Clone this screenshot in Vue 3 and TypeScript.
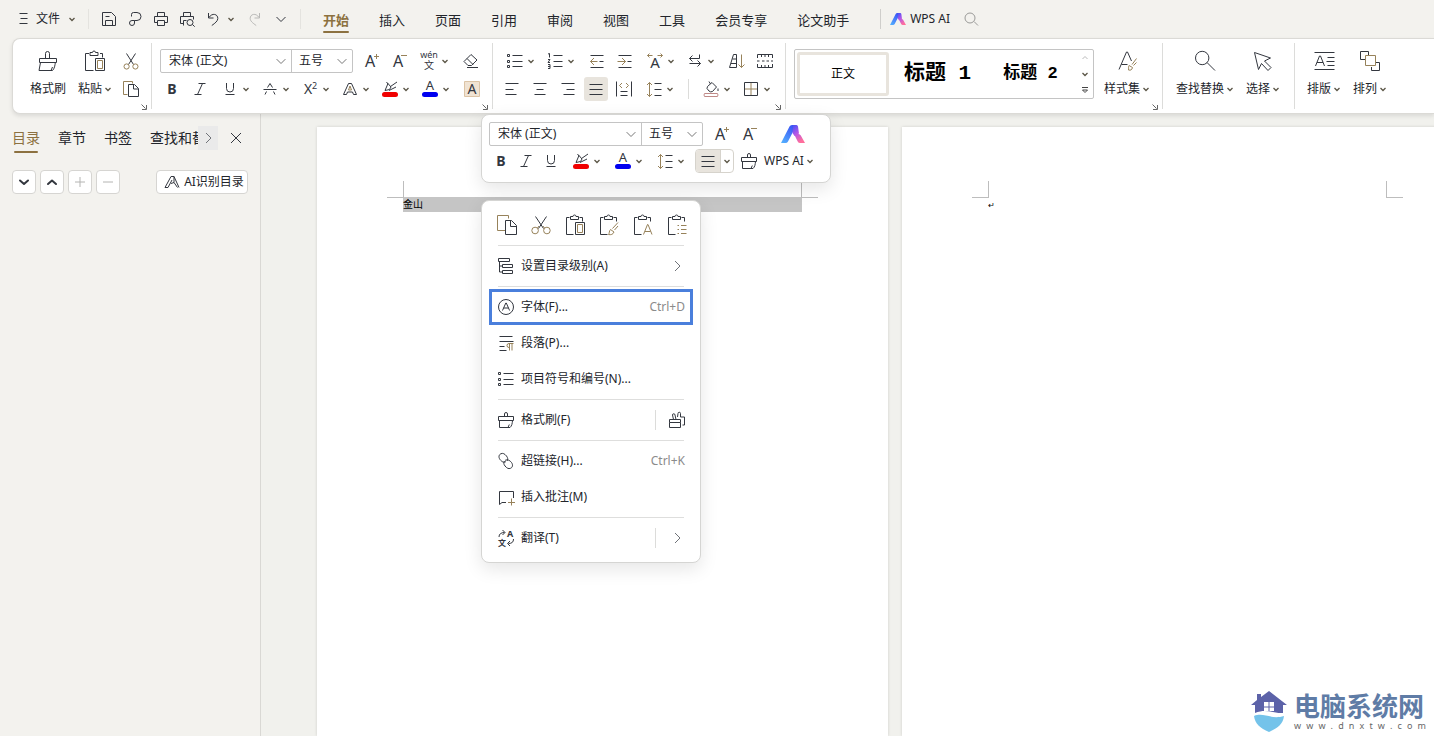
<script setup lang="ts">
import { h, type FunctionalComponent } from 'vue'

type Stroke = { d: string; c?: string; w?: number; f?: string }
type Glyph = { t: string; x: number; y: number; s: number; c?: string; b?: boolean }
type Shape = Stroke | Glyph

const K = '#33373f'
const G = '#97825a'
const clip = 'M6.5 4.5H3.5v17h7M16.5 4.5h3v4M7.5 6.5v-3h2.5a1.5 1.5 0 0 1 3 0h2.5v3z'
const brush = 'M10.500 8.500V6a1.500 1.500 0 0 1 3 0v2.500M4.500 12.500v-4h15v4zM5.500 12.500v7H16c1.800-1.500 2.300-4 2.500-7M14 19.500l1.300-3'
const scissors = 'M7.5 4.5l7 11M16.5 4.5l-7 11'
const loops = 'M5 17.5a2.6 2.6 0 1 0 5.2 0 2.6 2.6 0 1 0-5.2 0M13.8 17.5a2.6 2.6 0 1 0 5.2 0 2.6 2.6 0 1 0-5.2 0'
const marker = 'M7 13.500l3-7 3 3.500-1.500 2.500zM12.500 9.500L19 5M8.500 5l1.500 2M11 13.500l7-3.500'
const bar = 'M6.500 17.500h11'

const icons: Record<string, Shape[]> = {
  menu: [{ d: 'M7.5 6.5h8M8.5 11.5h7M7.5 16.5h8' }],
  save: [{ d: 'M5.5 5.5h9l4 4v9h-13zM8.5 18.5v-5h7v5M8.5 9.5h4' }],
  share: [{ d: 'M8.5 9.5v-2q0-2 2-2H14a4 4 0 0 1 0 8h-2.5v2.5a2.5 2.5 0 1 1-2.5-2.5h2.5' }],
  print: [{ d: 'M8.5 9.5v-4h7v4M8.5 15.5h-3v-6h13v6h-3M8.5 13.5h7v5h-7z' }],
  preview: [{ d: 'M8.5 9.5v-4h7v4M8.5 16.5h-3v-7h13v3M8.5 18.5v-5h3M17.5 17.5l2.2 2.2M12 15.5a3 3 0 1 0 6 0 3 3 0 1 0-6 0' }],
  undo: [{ d: 'M7.5 6v5h5M8 10.5C11 5.5 17 7 16.8 11.5c0 2.5-2.5 4.5-6 7' }],
  redo: [{ d: 'M16.5 6v5h-5M16 10.5C13 5.5 7 7 7.2 11.5c0 2.5 2.5 4.5 6 7', c: '#b9b9b7' }],
  down: [{ d: 'M7.5 10l4.5 4.5 4.5-4.5' }],
  brush: [{ d: brush }],
  brushLg: [{ d: 'M9.500 9.500V4.500a2 2 0 0 1 4 0v5M3.500 13.500v-4h17v4zM4.500 13.500l-1.500 8h13.500c2-2 2.500-5 2.800-8M15 21.500l1.500-3.500' }],
  pasteLg: [{ d: 'M6 4.5H2.5v17h8M17 4.5h2.5v4M7 6.5v-3h2.5a1.5 1.5 0 0 1 3 0H15v3zM12.5 9.5h9v12h-9z' }, { d: 'M14.5 11.5h5v8h-5z', c: G }],
  cut: [{ d: scissors }, { d: loops, c: G }],
  cutLg: [{ d: 'M6.5 3.5l8 12M17.5 3.5l-8 12' }, { d: 'M2.8 17.5a3.3 3.3 0 1 0 6.6 0 3.3 3.3 0 1 0-6.6 0M14.6 17.5a3.3 3.3 0 1 0 6.6 0 3.3 3.3 0 1 0-6.6 0M8.5 15l1.5-2M15.5 15L14 13', c: G }],
  copy: [{ d: 'M8.5 17.5h-4v-13h9v2', c: G }, { d: 'M9.5 7.5h6l4 4v8h-10zM14.5 7.5v4.5h5' }],
  copyLg: [{ d: 'M10.5 17.5h-8v-15h11v3', c: G }, { d: 'M10.5 7.5h6l5 5v9h-11zM15.5 7.5v6h6' }],
  paste: [{ d: clip + 'M12.5 9.5h9v12h-9z' }, { d: 'M14.5 11.5h5v8h-5z', c: G }],
  pasteBrush: [{ d: clip }, { d: 'M21 9.5l-5.5 6M21 13l-3.5 4M13.5 16.5l3.5 2.5c-1 2.5-3 3-5.500 2.500 1-1 .5-3.500 2-5z', c: G }],
  pasteA: [{ d: clip }, { d: 'M12.500 21.500l4-10h.5l4 10M14 18.500h5.500', c: G }],
  pasteList: [{ d: clip }, { d: 'M12.500 12.500h1.500M16 12.500h5.500M12.500 16.500h1.500M16 16.500h5.500M12.500 20.500h1.500M16 20.500h5.500', c: G }],
  bold: [{ t: 'B', x: 12, y: 17, s: 14, b: true }],
  italic: [{ d: 'M10.500 6.500h7M6.500 17.500h7M14.500 6.500l-5 11' }],
  underline: [{ d: 'M8.500 6v5.500a3.500 3.500 0 0 0 7 0V6M7.500 17.500h9' }],
  strike: [{ d: 'M9.500 10.500l2.500-4 2.500 4M5.500 12.500h13M8.500 14.500l-1.500 3M15.500 14.500l1.500 3' }],
  sup: [{ t: 'X', x: 10, y: 17, s: 14 }, { t: '2', x: 16.500, y: 12, s: 9 }],
  outline: [{ d: 'M5.500 17.500L10.500 6.500h3l5 11h-3l-1-2.500h-5l-1 2.500z' }, { d: 'M10.500 13l1.500-4 1.500 4z', c: G }],
  highlight: [{ d: marker }, { d: bar, c: '#f00000', w: 5 }],
  fontColor: [{ t: 'A', x: 12, y: 13, s: 13 }, { d: bar, c: '#0000f0', w: 5 }],
  shade: [{ d: 'M4.500 4.500h15v15h-15z', c: '#dcc4a6', f: '#f0e3d3' }, { t: 'A', x: 12, y: 17, s: 14 }],
  grow: [{ t: 'A', x: 11, y: 18, s: 16 }, { d: 'M15 7.500h5M17.500 5v5', c: G }],
  shrink: [{ t: 'A', x: 11, y: 18, s: 16 }, { d: 'M14 6.500h6', c: G }],
  pinyin: [{ t: 'wén', x: 12, y: 9, s: 9 }, { t: '文', x: 12, y: 20, s: 10 }],
  eraser: [{ d: 'M5 12.500l7-7 6 5.500-5.500 5.500H9zM8 9.500l6 6M8 18.500h11' }],
  bullets: [{ d: 'M9.500 6.500h10M9.500 12.500h10M9.500 17.500h10M4.500 5.500h2v2h-2zM4.500 11.500h2v2h-2zM4.500 16.500h2v2h-2z' }],
  numbers: [{ d: 'M10.500 6.500h9M10.500 12.500h9M10.500 17.500h9M5 5l1.500-.5v4M5 10.500h2l-2 3h2M5 15.500h2v4H5M5 17.500h2' }],
  outdent: [{ d: 'M5.500 6.500h13M14.500 12.500h4M5.500 18.500h13' }, { d: 'M12.500 12.500h-7M9 9l-3.500 3.500L9 16', c: G }],
  indent: [{ d: 'M5.500 6.500h13M14.500 12.500h4M5.500 18.500h13' }, { d: 'M4.500 12.500h8M9 9l3.500 3.500L9 16', c: G }],
  spread: [{ t: 'A', x: 12, y: 19, s: 15 }, { d: 'M4.500 6.500h5M14.500 6.500h5M6.500 4.500l-2 2 2 2M17.500 4.500l2 2-2 2', c: G }],
  wrap: [{ d: 'M16.500 5.500v4h-10M9.500 6.500l-3 3 3 3M6.500 14.500h11M14.500 11.500l3 3-3 3' }],
  sort: [{ d: 'M8.500 5.500h3v13M4.500 18.500l4-13M4.500 18.500h7M6 14.500h5.500M7.500 10h4' }, { d: 'M16.500 5.500v13M13.500 15.500l3 3 3-3', c: G }],
  cells: [{ d: 'M4.500 9V5.500h15V9M8.500 5.500V8M12 5.500V8M15.500 5.500V8M4.500 15v3.500h15V15M8.500 16v2.500M12 16v2.500M15.500 16v2.500M4 12h2.500M9 12h2.500M13.500 12H16M18 12h2' }],
  left: [{ d: 'M5.500 6.500h13M5.500 12.500h8M5.500 17.500h11' }],
  center: [{ d: 'M5.500 6.500h13M8.500 12.500h7M6.500 17.500h11' }],
  right: [{ d: 'M5.500 6.500h13M10.500 12.500h8M7.500 17.500h11' }],
  justify: [{ d: 'M5.500 7.500h13M5.500 12.500h13M5.500 17.500h13' }],
  distribute: [{ d: 'M4.500 4.500v15M19.500 4.500v15M8.500 14.500h7M8.500 18.500h7' }, { d: 'M10 6L7.500 8.500 10 11M14 6l2.500 2.500L14 11', c: G }],
  spacing: [{ d: 'M12.500 6.500h7M12.500 12.500h7M12.500 18.500h7' }, { d: 'M7.500 5.500v14M5 8l2.500-2.500L10 8M5 17l2.500 2.500L10 17', c: G }],
  fill: [{ d: 'M8.500 9.500l4.500-4 4.500 4.500-4 4.500q-2 1-3.500-.5l-2-2.500zM11.500 7L10 4.500M19 11.500v2.500' }, { d: 'M5.500 16.500h13q1 1.500 0 3h-13q-1-1.500 0-3z', c: '#c08a88' }],
  border: [{ d: 'M12 6v12M6 12h12', c: G }, { d: 'M5.500 5.500h13v13h-13z' }],
  styles: [{ d: 'M4 20.500L11.500 3h1l4 9M6.500 15.500h6' }, { d: 'M21.500 9.500l-4.500 6M21.500 13.500l-3 3M14 16.500l3.500 2c-.5 2.500-2 3-4 2.500.5-1.500-.5-3 .5-4.500z', c: G }],
  find: [{ d: 'M2.500 9a6.700 6.700 0 1 0 13.400 0 6.700 6.700 0 1 0-13.400 0M14 13.500l8 8' }],
  pointer: [{ d: 'M3.500 3.500l16 5.500-6 3 6.500 6.500-3 3-6.500-7-3 6z' }],
  typeset: [{ d: 'M2.500 3.500h20M2.500 20.500h20M15.500 8.500h7M14.500 12.500h8M15.500 16.500h7M3.500 17L7.500 7h1l4 10M5 13.500h6' }],
  arrange: [{ d: 'M7 10.500H2.500v-8h8V6M17 13.500h4.500v8h-8V18' }, { d: 'M7.500 6.500h10v10h-10z', c: G }],
  search: [{ d: 'M6 11a5 5 0 1 0 10 0 5 5 0 1 0-10 0M15 14.500l4 4', c: '#9a9a98' }],
  aiToc: [{ d: 'M5 17.500L11 6.500h3l5 11M5 17.500h3l4-7.500M11 13.500l3-1 3.500 5M14 6.500v6' }],
  tree: [{ d: 'M4.500 4.500h11v3h-11zM8.500 10.500h10v3h-10zM8.500 16.500h10v3h-10zM5.500 7.500v10.500h3M5.500 12h3' }],
  circleA: [{ d: 'M4.500 12a7.500 7.500 0 1 0 15 0 7.500 7.500 0 1 0-15 0M8.500 15.500l3.300-7.500h.5l3.300 7.500M9.500 13h5' }],
  para: [{ d: 'M5.500 5.500h13M5.500 10.500h14M5.500 15.500h5M5.500 19.500h7' }, { d: 'M19.500 12.500H15a1.800 1.800 0 0 0 0 4M15.500 12.500v7M18 12.500v7', c: G }],
  brushes: [{ d: 'M4.500 14.500v-3h11v3zM4.500 14.500v5h11v-5M8.500 11.500l-1-4.500a1.200 1.200 0 0 1 2.500 0l1 4.500M12.500 9l.5-3.500a1.200 1.200 0 0 1 2.500 0V9h4v3M19.500 12v5H17.500' }],
  link: [{ d: 'M12 12.500c-2 1.500-4 .5-6-2-1.800-2.500-1-5 1-5.800 2-.8 3.500 0 5.500 2.300 1.500 2 1.500 3.500.5 5M11 11.500c2-1.500 4.500-.5 6.500 2 1.800 2.500 1 5-1 5.800-2 .8-3.500 0-5.500-2.300-1.500-2-1.500-3.500-.5-5' }],
  comment: [{ d: 'M12 17.500H8l-2.500 2V6.500h14v6.500' }, { d: 'M17.500 13.500v7M14 17.500h7', c: G }],
  translate: [{ t: 'A', x: 16, y: 11, s: 9, b: true }, { t: '文', x: 8, y: 20, s: 8, b: true }, { d: 'M5 11c0-3 2-4.500 5.500-4.500M8.500 4l2.500 2.500L8.500 9M19.500 13c0 3-1.500 4.500-5 4.500M16 15l-2.500 2.500L16 20' }],
  next: [{ d: 'M10 7l5 5-5 5', c: '#6f7278' }],
  close: [{ d: 'M7 7l10 10M17 7L7 17' }],
  bigDown: [{ d: 'M8 10.500l4 3.500 4-3.500', w: 2 }],
  bigUp: [{ d: 'M8 14l4-3.500 4 3.500', w: 2 }],
  plus: [{ d: 'M7 12h10M12 7v10', c: '#b4b4b2' }],
  minus: [{ d: 'M7 12h10', c: '#b4b4b2' }],
}

const Icon: FunctionalComponent<{ name: string }> = (props) =>
  h('svg', { class: 'icon', viewBox: '0 0 24 24', width: 24, height: 24, 'aria-hidden': 'true' },
    icons[props.name].map((s) =>
      't' in s
        ? h('text', { x: s.x, y: s.y, 'font-size': s.s, 'font-weight': s.b ? 700 : 400, fill: s.c ?? K, 'text-anchor': 'middle' }, s.t)
        : h('path', { d: s.d, fill: s.f ?? 'none', stroke: s.c ?? K, 'stroke-width': s.w ?? 1, 'stroke-linejoin': 'round', 'stroke-linecap': s.w ? 'round' : 'butt' }),
    ))
Icon.props = ['name']

const Chev: FunctionalComponent<{ thin?: boolean }> = (props) =>
  h('svg', { class: 'chev', viewBox: '0 0 8 8', width: 8, height: 8, 'aria-hidden': 'true' },
    [h('path', { d: props.thin ? 'M.5 2.500L4 6l3.500-3.500' : 'M1.500 3L4 5.500 6.500 3', fill: 'none', stroke: props.thin ? '#777' : '#5a5546', 'stroke-width': props.thin ? 0.8 : 1.3 })])
Chev.props = ['thin']

const Launcher: FunctionalComponent = () =>
  h('svg', { class: 'launcher', viewBox: '0 0 8 8', width: 8, height: 8, 'aria-hidden': 'true' },
    [h('path', { d: 'M1.500 1.500l4 4M6.500 2v4.500H2', fill: 'none', stroke: '#666', 'stroke-width': 1 })])

const AiLogo: FunctionalComponent = () =>
  h('svg', { class: 'ai-logo', viewBox: '0 0 24 18', 'aria-hidden': 'true' }, [
    h('defs', [
      h('linearGradient', { id: 'ai-left', x1: 0, y1: 1, x2: 0.6, y2: 0 }, [
        h('stop', { offset: 0, 'stop-color': '#55b4ff' }), h('stop', { offset: 1, 'stop-color': '#3a55f5' })]),
      h('linearGradient', { id: 'ai-right', x1: 0, y1: 0, x2: 0.5, y2: 1 }, [
        h('stop', { offset: 0, 'stop-color': '#3f52f5' }), h('stop', { offset: 0.5, 'stop-color': '#b257e8' }), h('stop', { offset: 1, 'stop-color': '#ff6e9c' })]),
    ]),
    h('path', { d: 'M8.500 1.500Q9.200 0 11 0h4.500L7 16.500Q6.200 18 4.500 18H0z', fill: 'url(#ai-left)' }),
    h('path', { d: 'M12 0h3.500q1.200 0 1.500 1.500l1 7L13.500 11l-2-3zM13 9h4.500q1.500 0 2.300 1.500L24 18h-5q-1.500 0-2.300-1.500z', fill: 'url(#ai-right)' }),
  ])

const tabs = ['开始', '插入', '页面', '引用', '审阅', '视图', '工具', '会员专享', '论文助手']
const sideTabs = ['目录', '章节', '书签', '查找和替换']
const sideTools = [
  { icon: 'bigDown', label: '展开' },
  { icon: 'bigUp', label: '收起' },
  { icon: 'plus', label: '增加' },
  { icon: 'minus', label: '减少' },
]
const textEffects = ['underline', 'strike', 'sup', 'outline', 'highlight', 'fontColor']
const pasteIcons = ['copyLg', 'cutLg', 'paste', 'pasteBrush', 'pasteA', 'pasteList']

type Entry = { icon: string; text: string; key?: string; tail?: string; split?: boolean; active?: boolean }
const menu: Entry[][] = [
  [{ icon: 'tree', text: '设置目录级别(A)', tail: 'next' }],
  [
    { icon: 'circleA', text: '字体(F)...', key: 'Ctrl+D', active: true },
    { icon: 'para', text: '段落(P)...' },
    { icon: 'bullets', text: '项目符号和编号(N)...' },
  ],
  [{ icon: 'brush', text: '格式刷(F)', tail: 'brushes', split: true }],
  [
    { icon: 'link', text: '超链接(H)...', key: 'Ctrl+K' },
    { icon: 'comment', text: '插入批注(M)' },
  ],
  [{ icon: 'translate', text: '翻译(T)', tail: 'next', split: true }],
]
const site = 'www.dnxtw.com'.split('')
</script>

<template>
  <div class="app">
    <header class="topbar">
      <button class="file"><Icon name="menu" /><span>文件</span><Chev /></button>
      <i class="vline"></i>
      <div class="quick">
        <button aria-label="保存"><Icon name="save" /></button>
        <button aria-label="输出"><Icon name="share" /></button>
        <button aria-label="打印"><Icon name="print" /></button>
        <button aria-label="预览"><Icon name="preview" /></button>
        <button class="undo" aria-label="撤销"><Icon name="undo" /><Chev /></button>
        <button aria-label="恢复"><Icon name="redo" /></button>
        <button aria-label="更多"><Icon name="down" /></button>
      </div>
      <i class="vline"></i>
      <nav class="tabs">
        <button v-for="(t, i) in tabs" :key="t" :class="{ on: i === 0 }">{{ t }}</button>
      </nav>
      <i class="vline dark"></i>
      <button class="wps"><AiLogo /><span>WPS AI</span></button>
      <button aria-label="搜索"><Icon name="search" /></button>
    </header>

    <section class="ribbon">
      <div class="group clipboard">
        <button class="big"><Icon name="brushLg" /><span>格式刷</span></button>
        <button class="big"><Icon name="pasteLg" /><span>粘贴<Chev /></span></button>
        <div class="rows">
          <button aria-label="剪切"><Icon name="cut" /></button>
          <button aria-label="复制"><Icon name="copy" /></button>
        </div>
        <Launcher />
      </div>

      <div class="group font">
        <div class="rows">
          <div class="row">
            <div class="combos">
              <label class="combo name"><select aria-label="字体"><option>宋体 (正文)</option></select><Chev :thin="true" /></label>
              <label class="combo size"><select aria-label="字号"><option>五号</option></select><Chev :thin="true" /></label>
            </div>
            <div class="set">
              <button aria-label="增大字号"><Icon name="grow" /></button>
              <button aria-label="减小字号"><Icon name="shrink" /></button>
            </div>
            <button class="split" aria-label="拼音"><Icon name="pinyin" /><Chev /></button>
            <button aria-label="清除格式"><Icon name="eraser" /></button>
          </div>
          <div class="row">
            <div class="set">
              <button aria-label="加粗"><Icon name="bold" /></button>
              <button aria-label="倾斜"><Icon name="italic" /></button>
            </div>
            <div class="set">
              <button v-for="e in textEffects" :key="e" class="split" :aria-label="e"><Icon :name="e" /><Chev /></button>
            </div>
            <button aria-label="底纹"><Icon name="shade" /></button>
          </div>
        </div>
        <Launcher />
      </div>

      <div class="group para">
        <div class="rows">
          <div class="row lists">
            <div class="set">
              <button class="split" aria-label="项目符号"><Icon name="bullets" /><Chev /></button>
              <button class="split" aria-label="编号"><Icon name="numbers" /><Chev /></button>
            </div>
            <div class="set">
              <button aria-label="减少缩进"><Icon name="outdent" /></button>
              <button aria-label="增加缩进"><Icon name="indent" /></button>
            </div>
            <div class="set">
              <button class="split" aria-label="中文版式"><Icon name="spread" /><Chev /></button>
              <button class="split" aria-label="换行"><Icon name="wrap" /><Chev /></button>
            </div>
            <div class="set">
              <button aria-label="排序"><Icon name="sort" /></button>
              <button aria-label="制表位"><Icon name="cells" /></button>
            </div>
          </div>
          <div class="row">
            <div class="set">
              <button aria-label="左对齐"><Icon name="left" /></button>
              <button aria-label="居中"><Icon name="center" /></button>
              <button aria-label="右对齐"><Icon name="right" /></button>
              <button class="pressed" aria-label="两端对齐"><Icon name="justify" /></button>
              <button aria-label="分散对齐"><Icon name="distribute" /></button>
            </div>
            <button class="split" aria-label="行距"><Icon name="spacing" /><Chev /></button>
            <i class="vline small"></i>
            <div class="set">
              <button class="split" aria-label="填充"><Icon name="fill" /><Chev /></button>
              <button class="split" aria-label="边框"><Icon name="border" /><Chev /></button>
            </div>
          </div>
        </div>
        <Launcher />
      </div>

      <div class="group style">
        <div class="gallery">
          <button class="normal">正文</button>
          <button class="h1">标题 1</button>
          <button class="h2">标题 2</button>
          <div class="scroll">
            <svg viewBox="0 0 8 8" width="8" height="8"><path d="M1.500 5L4 2.500 6.500 5" fill="none" stroke="#bbb" /></svg>
            <Chev />
            <svg viewBox="0 0 8 8" width="8" height="8"><path d="M1 1.500h6M1.500 4L4 6.500 6.500 4z" fill="none" stroke="#444" /></svg>
          </div>
        </div>
        <button class="big"><Icon name="styles" /><span>样式集<Chev /></span></button>
        <Launcher />
      </div>

      <div class="group edit">
        <button class="big"><Icon name="find" /><span>查找替换<Chev /></span></button>
        <button class="big"><Icon name="pointer" /><span>选择<Chev /></span></button>
      </div>

      <div class="group layout">
        <button class="big"><Icon name="typeset" /><span>排版<Chev /></span></button>
        <button class="big"><Icon name="arrange" /><span>排列<Chev /></span></button>
      </div>
    </section>

    <main class="work">
      <aside class="side">
        <div class="side-head">
          <div class="side-tabs">
            <button v-for="(t, i) in sideTabs" :key="t" :class="{ on: i === 0 }">{{ t }}</button>
          </div>
          <button class="more" aria-label="更多标签"><Icon name="next" /></button>
          <button class="shut" aria-label="关闭"><Icon name="close" /></button>
        </div>
        <div class="side-tools">
          <button v-for="t in sideTools" :key="t.icon" class="box" :aria-label="t.label"><Icon :name="t.icon" /></button>
          <button class="box ai"><Icon name="aiToc" /><span>AI识别目录</span></button>
        </div>
      </aside>

      <div class="canvas">
        <article class="page">
          <i class="mark tl"></i><i class="mark tr"></i>
          <p class="selected">金山</p>
        </article>
        <article class="page">
          <i class="mark tl"></i><i class="mark tr"></i>
          <p class="blank">↵</p>
        </article>
      </div>
    </main>

    <div class="mini">
      <div class="row top">
        <div class="combos">
          <label class="combo wide"><select aria-label="字体"><option>宋体 (正文)</option></select><Chev :thin="true" /></label>
          <label class="combo size"><select aria-label="字号"><option>五号</option></select><Chev :thin="true" /></label>
        </div>
        <div class="set">
          <button aria-label="增大字号"><Icon name="grow" /></button>
          <button aria-label="减小字号"><Icon name="shrink" /></button>
        </div>
        <AiLogo />
      </div>
      <div class="row">
        <div class="set tight">
          <button aria-label="加粗"><Icon name="bold" /></button>
          <button aria-label="倾斜"><Icon name="italic" /></button>
          <button aria-label="下划线"><Icon name="underline" /></button>
        </div>
        <button class="split" aria-label="突出显示"><Icon name="highlight" /><Chev /></button>
        <button class="split" aria-label="字体颜色"><Icon name="fontColor" /><Chev /></button>
        <button class="split" aria-label="行距"><Icon name="spacing" /><Chev /></button>
        <div class="set close">
          <div class="seg">
            <button class="pressed" aria-label="两端对齐"><Icon name="justify" /></button>
            <button class="drop" aria-label="对齐方式"><Chev /></button>
          </div>
          <button aria-label="格式刷"><Icon name="brush" /></button>
          <button class="wps"><span>WPS AI</span><Chev /></button>
        </div>
      </div>
    </div>

    <div class="context">
      <div class="paste-row">
        <button v-for="p in pasteIcons" :key="p" :aria-label="p"><Icon :name="p" /></button>
      </div>
      <ul v-for="(block, i) in menu" :key="i">
        <li v-for="m in block" :key="m.text">
          <button class="entry" :class="{ active: m.active }">
            <Icon :name="m.icon" />
            <span class="label">{{ m.text }}</span>
            <kbd v-if="m.key">{{ m.key }}</kbd>
            <i v-if="m.split" class="vline small"></i>
            <Icon v-if="m.tail" :name="m.tail" class="tail" />
          </button>
        </li>
      </ul>
    </div>

    <div class="brand">
      <svg viewBox="0 0 36 42" width="36" height="42" aria-hidden="true">
        <path d="M18 1l18 14h-4v8c-8 1-16-5-28 0v-8H0l6-5V4h4v3z" fill="#5c62a8" />
        <path d="M13 12h4.500v4.500H13zM18.500 12H23v4.500h-4.500zM13 17.500h4.500V21H13zM18.500 17.500H23V21h-4.500z" fill="#fff" />
        <path d="M3 26c10-4 17 4 30 0-1 8-6 12-15 16C9 38 4 34 3 26z" fill="#74c3ea" />
      </svg>
      <div class="brand-text">
        <strong>电脑系统网</strong>
        <div class="site"><span v-for="(c, i) in site" :key="i">{{ c }}</span></div>
      </div>
    </div>
  </div>
</template>

<style>
body {
  margin: 0;
  overflow: hidden;
}
</style>

<style scoped>
.app {
  position: relative;
  display: flex;
  flex-direction: column;
  height: 100vh;
  overflow: hidden;
  background: #f3f2ee;
  color: #22252b;
  font: 12px/16px "Noto Sans", "Noto Sans CJK SC", sans-serif;
}
button {
  display: flex;
  align-items: center;
  flex: none;
  padding: 0;
  border: 0;
  background: none;
  color: inherit;
  font: inherit;
  white-space: nowrap;
}
.icon,
.chev {
  display: block;
  flex: none;
}
.vline {
  flex: none;
  width: 1px;
  height: 20px;
  background: #e4e3df;
}
.vline.dark {
  background: #cfcecb;
}
.vline.small {
  background: #dcdcda;
}

.topbar {
  display: flex;
  align-items: center;
  height: 38px;
  padding-left: 12px;
}
.file span {
  margin-right: 8px;
}
.file + .vline {
  margin: 0 8px 0 12px;
}
.quick {
  display: flex;
  align-items: center;
  gap: 2px;
}
.undo {
  gap: 2px;
  width: 40px;
}
.quick + .vline {
  margin: 0 22px 0 7px;
}
.tabs {
  display: flex;
  gap: 30px;
  font-size: 13px;
  line-height: 18px;
}
.tabs button {
  height: 38px;
  box-sizing: border-box;
  padding-top: 2px;
}
.tabs .on,
.side-tabs .on {
  position: relative;
  color: #8c7140;
  font-weight: 700;
}
.tabs .on::after,
.side-tabs .on::after {
  content: "";
  position: absolute;
  left: 0;
  right: 0;
  bottom: 5px;
  height: 2px;
  border-radius: 1px;
  background: #8c7140;
}
.tabs + .vline {
  margin: 0 9px 0 31px;
}
.ai-logo {
  width: 16px;
  height: 12px;
  flex: none;
}
.topbar .wps {
  gap: 4px;
  margin-right: 9px;
}

.ribbon {
  position: relative;
  z-index: 1;
  display: flex;
  flex: none;
  margin-left: 12px;
  border: 1px solid #dbdad6;
  border-right: 0;
  border-radius: 8px 0 0 8px;
  box-sizing: border-box;
  height: 76px;
  background: #fff;
  box-shadow: 0 2px 4px rgba(0, 0, 0, 0.1);
}
.group {
  position: relative;
  display: flex;
  flex: none;
  align-items: flex-start;
  margin: 4px 0;
  padding-top: 6px;
  border-right: 1px solid #dcdcda;
}
.group:last-child {
  border-right: 0;
}
.launcher {
  position: absolute;
  right: 3px;
  bottom: -2px;
}
.rows {
  display: flex;
  flex-direction: column;
  gap: 4px;
}
.row {
  display: flex;
  align-items: center;
  gap: 6px;
}
.set {
  display: flex;
  align-items: center;
  gap: 4px;
}
.split {
  width: 36px;
}
.big {
  flex-direction: column;
  gap: 8px;
}
.big span {
  display: flex;
  align-items: center;
  gap: 2px;
}
.clipboard {
  padding-left: 17px;
  padding-right: 8px;
}
.clipboard .big + .big {
  margin-left: 12px;
}
.clipboard .rows {
  margin-left: 7px;
}
.font {
  padding-left: 8px;
  padding-right: 8px;
}
.para {
  padding-left: 7px;
  padding-right: 8px;
}
.para .vline {
  margin: 0 4px;
}
.lists {
  padding-left: 3px;
}
.combos {
  display: flex;
  border: 1px solid #c4c4c4;
  border-radius: 2px;
}
.combo {
  position: relative;
  display: flex;
  height: 22px;
}
.combo + .combo {
  border-left: 1px solid #c4c4c4;
}
.combo select {
  width: 100%;
  padding: 0 8px;
  border: 0;
  background: none;
  appearance: none;
  color: inherit;
  font: inherit;
}
.combo .chev {
  position: absolute;
  right: 5px;
  top: 6px;
  width: 10px;
  height: 10px;
}
.combo.name {
  width: 130px;
}
.combo.wide {
  width: 151px;
}
.combo.size {
  width: 60px;
}
.combo.size select {
  padding: 0 7px;
}
.pressed {
  border-radius: 3px;
  background: #e8e4dd;
}
.style {
  padding-left: 8px;
  padding-right: 12px;
}
.gallery {
  display: flex;
  align-items: stretch;
  height: 48px;
  margin-right: 10px;
  border: 1px solid #c4c4c4;
  border-radius: 2px;
  color: #000;
}
.gallery button {
  justify-content: center;
}
.gallery .normal {
  width: 92px;
  margin: 2px;
  border: 3px solid #e8e4dd;
  border-radius: 3px;
}
.gallery .h1,
.gallery .h2 {
  width: 93px;
  font-family: "Liberation Mono", "Noto Sans CJK SC", monospace;
  font-weight: 700;
}
.gallery .h1 {
  font-size: 21px;
}
.gallery .h2 {
  font-size: 17px;
}
.scroll {
  display: flex;
  flex-direction: column;
  justify-content: space-around;
  padding: 0 4px;
}
.edit {
  padding-left: 13px;
  padding-right: 14px;
}
.edit .big + .big {
  margin-left: 12px;
}
.layout {
  padding-left: 12px;
}
.layout .big + .big {
  margin-left: 12px;
}

.work {
  display: flex;
  flex: 1;
  min-height: 0;
}
.side {
  flex: none;
  width: 260px;
  border-right: 1px solid #d9d8d4;
}
.side-head {
  display: flex;
  align-items: center;
  height: 24px;
  padding: 12px 12px 0;
}
.side-tabs {
  display: flex;
  flex: 1;
  gap: 18px;
  height: 30px;
  overflow: hidden;
  font-size: 14px;
}
.side-tabs .on {
  font-weight: 400;
}
.side-tabs .on::after {
  left: 2px;
  right: 2px;
  bottom: 0;
}
.more {
  justify-content: center;
  width: 20px;
  height: 24px;
  overflow: hidden;
  background: #eaeaea;
}
.shut {
  margin-left: 6px;
}
.side-tools {
  display: flex;
  gap: 4px;
  padding: 20px 12px;
}
.box {
  box-sizing: border-box;
  justify-content: center;
  width: 24px;
  height: 24px;
  border: 1px solid #d6d5d2;
  border-radius: 4px;
  background: #fff;
}
.box.ai {
  width: 92px;
  margin-left: auto;
}
.canvas {
  display: flex;
  flex: 1;
  gap: 14px;
  min-width: 0;
  padding: 13px 0 0 56px;
  overflow: hidden;
  background: #f1f1ed;
}
.page {
  position: relative;
  flex: none;
  box-sizing: border-box;
  width: 571px;
  padding: 70px 86px;
  background: #fff;
  box-shadow: 0 0 3px rgba(0, 0, 0, 0.14);
}
.page p {
  margin: 0;
  height: 15px;
  font-size: 10px;
  line-height: 15px;
  color: #000;
}
.selected {
  background: #c5c5c5;
}
.page .blank {
  font-size: 8px;
}
.mark {
  position: absolute;
  top: 54px;
  width: 16px;
  height: 16px;
  border-bottom: 1px solid #bdbdbd;
}
.mark.tl {
  left: 70px;
  border-right: 1px solid #bdbdbd;
}
.mark.tr {
  right: 70px;
  border-left: 1px solid #bdbdbd;
}

.mini,
.context {
  position: absolute;
  z-index: 2;
  box-sizing: border-box;
  border: 1px solid #d5d5d3;
  border-radius: 8px;
  background: #fff;
  box-shadow: 0 6px 18px rgba(0, 0, 0, 0.1);
}
.mini {
  left: 481px;
  top: 114px;
  width: 350px;
  padding: 7px 7px 9px;
}
.mini .top .ai-logo {
  width: 24px;
  height: 18px;
  margin-left: 14px;
}
.mini .row + .row {
  margin-top: 3px;
}
.mini .tight {
  gap: 1px;
}
.mini .close {
  gap: 3px;
}
.seg {
  display: flex;
  box-sizing: border-box;
  height: 24px;
  border: 1px solid #d6d3cc;
  border-radius: 4px;
  overflow: hidden;
}
.seg .pressed {
  border-radius: 0;
}
.seg .drop {
  justify-content: center;
  width: 13px;
  border-left: 1px solid #d6d3cc;
}
.mini .wps {
  gap: 2px;
}

.context {
  left: 481px;
  top: 200px;
  width: 220px;
  padding: 0 7px 4px;
}
.paste-row {
  display: flex;
  gap: 10px;
  padding: 12px 6px 8px;
}
.context ul {
  margin: 0;
  padding: 2px 0;
  list-style: none;
}
.context ul::before {
  content: "";
  display: block;
  height: 1px;
  margin: -2px 9px 2px;
  background: #dededd;
}
.entry {
  box-sizing: border-box;
  width: 100%;
  height: 36px;
  padding: 0 5px 0 2px;
  border: 3px solid transparent;
}
.entry.active {
  border-color: #4a7fdc;
}
.label {
  flex: 1;
  margin-left: 3px;
  text-align: left;
}
kbd {
  color: #8b8b8b;
  font: inherit;
}
.entry .vline {
  margin-right: 9px;
}
.entry .tail {
  margin-right: -4px;
}

.brand {
  position: absolute;
  right: 8px;
  bottom: 4px;
  display: flex;
  align-items: center;
  gap: 7px;
}
.brand-text {
  width: 132px;
}
.brand strong {
  display: block;
  color: #5f7ca6;
  font: 700 26px/30px "Noto Sans CJK SC", sans-serif;
  white-space: nowrap;
}
.site {
  display: flex;
  justify-content: space-between;
  color: #666;
  font-size: 9px;
  line-height: 12px;
}
</style>
